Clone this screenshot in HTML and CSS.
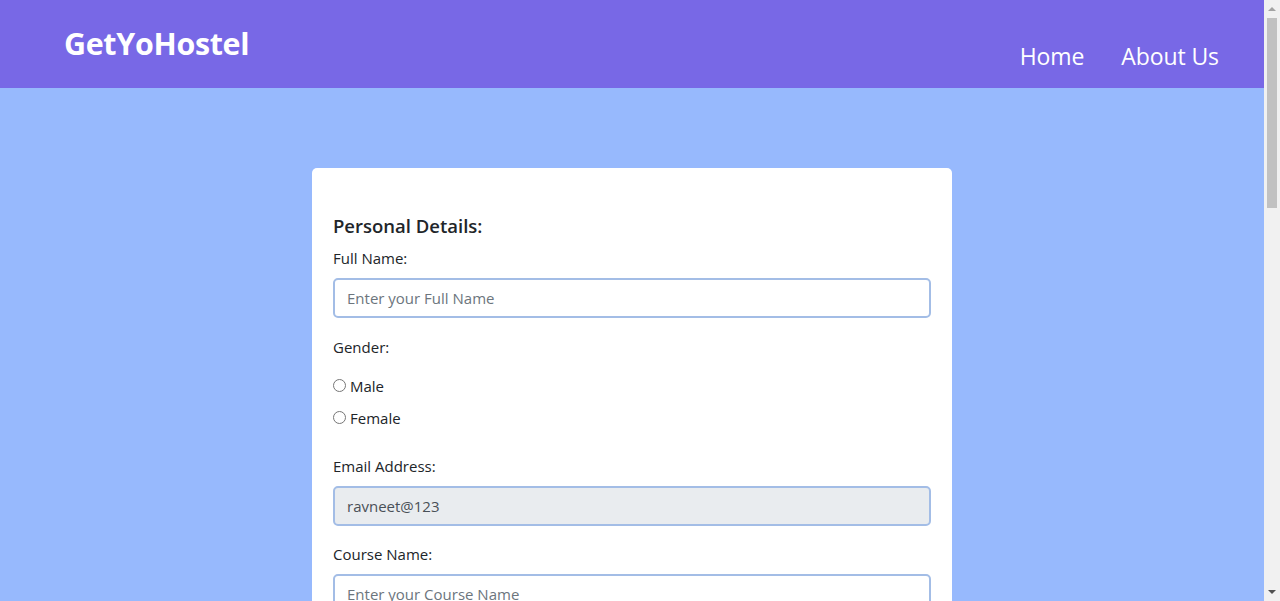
FILE: index.html
```html
<!DOCTYPE html>
<html lang="en">
<head>
<meta charset="utf-8">
<title>GetYoHostel</title>
<link rel="stylesheet" href="styles.css">
</head>
<body>
<div class="viewport">
<header class="navbar">
  <a class="brand" href="#">GetYoHostel</a>
  <nav class="nav">
    <a href="#">Home</a>
    <a href="#">About Us</a>
  </nav>
</header>
<main class="page">
  <form class="card">
    <h2 class="title">Personal Details:</h2>
    <label class="label" for="name">Full Name:</label>
    <input class="field" id="name" type="text" placeholder="Enter your Full Name">
    <div class="label gender">Gender:</div>
    <label class="radio"><input type="radio" name="g"> Male</label>
    <label class="radio"><input type="radio" name="g"> Female</label>
    <label class="label email" for="email">Email Address:</label>
    <input class="field disabled" id="email" type="text" value="ravneet@123" readonly>
    <label class="label course" for="course">Course Name:</label>
    <input class="field" id="course" type="text" placeholder="Enter your Course Name">
  </form>
</main>
</div>
<div class="scrollbar" aria-hidden="true">
  <svg class="arrow" width="16" height="17" viewBox="0 0 16 17"><path d="M4 11 L8 7 L12 11 Z" fill="#a3a3a3"/></svg>
  <div class="thumb"></div>
  <div class="track-rest"></div>
  <svg class="arrow" width="16" height="17" viewBox="0 0 16 17"><path d="M4 6 L8 10 L12 6 Z" fill="#505050"/></svg>
</div>
</body>
</html>
```
FILE: styles.css
```css
html, body {
  margin: 0;
  padding: 0;
}
body {
  font-family: "Open Sans", "Noto Sans", sans-serif;
  background: #97b9fd;
  color: #212529;
  height: 601px;
  overflow: hidden;
}
.viewport {
  width: 1264px;
}
.navbar {
  height: 88px;
  background: #7868e6;
  display: flex;
  justify-content: space-between;
  align-items: flex-start;
  padding: 0 45px 0 64px;
  box-sizing: border-box;
}
.brand {
  color: #fff;
  text-decoration: none;
  font-weight: 700;
  font-size: 30.4px;
  letter-spacing: -0.3px;
  margin-top: 24px;
  line-height: 40px;
}
.nav {
  display: flex;
  gap: 37px;
  margin-top: 38px;
}
.nav a {
  color: #fff;
  text-decoration: none;
  font-size: 23px;
  line-height: 36px;
  letter-spacing: -0.1px;
}
.page {
  display: flex;
  justify-content: center;
  padding: 80px 0 40px;
}
.card {
  width: 640px;
  box-sizing: border-box;
  background: #fff;
  border-radius: 5px;
  padding: 44px 21px 20px 21px;
  display: flex;
  flex-direction: column;
}
.title {
  margin: 0;
  font-size: 18.5px;
  font-weight: 600;
  line-height: 28px;
  color: #212529;
}
.label {
  font-size: 15px;
  line-height: 24px;
  margin-top: 6px;
  margin-bottom: 8px;
}
.field {
  font-family: inherit;
  font-size: 15px;
  height: 40px;
  box-sizing: border-box;
  border: 2px solid #a3bde6;
  border-radius: 5px;
  padding: 0 12px;
  color: #495057;
  background: #fff;
  outline: none;
}
.field::placeholder {
  color: #6c757d;
}
.field.disabled {
  background: #e9ecef;
}
.gender {
  margin-top: 17px;
  margin-bottom: 15px;
}
.radio {
  font-size: 15px;
  line-height: 24px;
  margin-bottom: 8px;
  display: flex;
  align-items: center;
  gap: 4px;
}
.radio input {
  margin: 0;
  width: 13px;
  height: 13px;
  position: relative;
  top: -1px;
}
.email {
  margin-top: 16px;
}
.course {
  margin-top: 16px;
}
.scrollbar {
  position: fixed;
  top: 0;
  right: 0;
  width: 16px;
  height: 601px;
  background: #f1f1f1;
  display: flex;
  flex-direction: column;
  align-items: center;
}
.arrow {
  display: block;
  flex: none;
}
.thumb {
  width: 10px;
  height: 190px;
  margin-top: 1px;
  background: #c1c1c1;
  flex: none;
}
.track-rest {
  flex: 1;
}
```
